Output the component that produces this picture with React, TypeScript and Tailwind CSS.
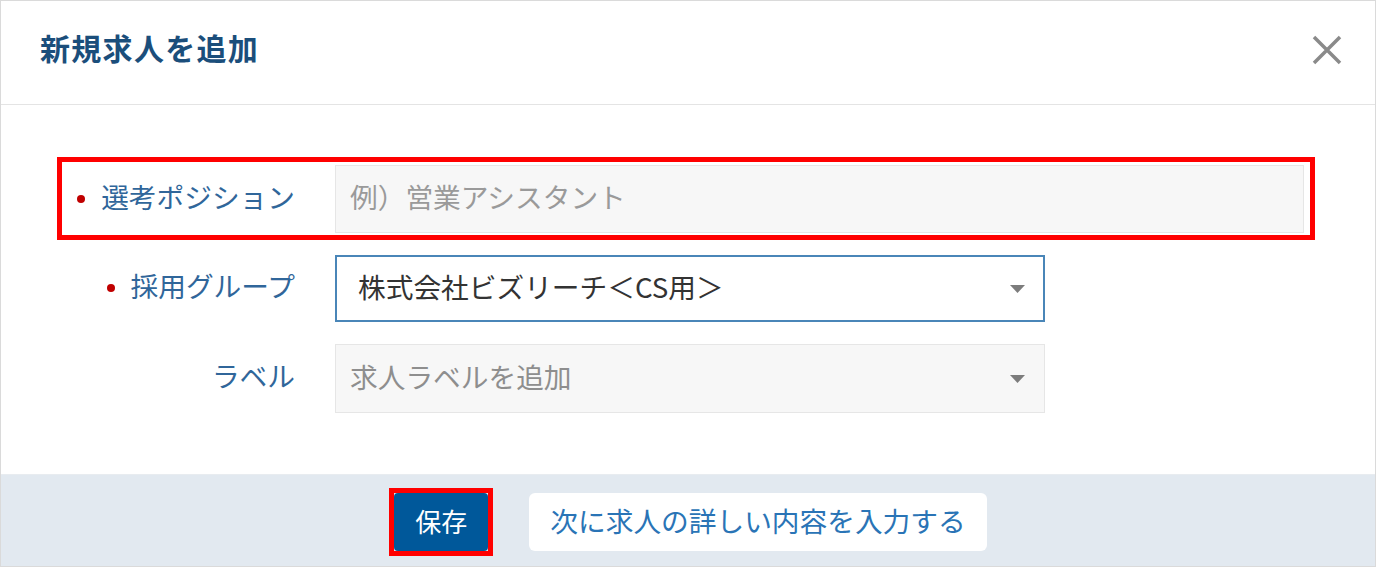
import React from 'react';

const font = { fontFamily: '"Noto Sans CJK JP", "Noto Sans", sans-serif' };

const Caret = () => (
  <svg width="15" height="8" viewBox="0 0 15 8" className="shrink-0">
    <polygon points="0,0 15,0 7.5,8" fill="#7c7c7c" />
  </svg>
);

const Label: React.FC<{ text: string; required?: boolean }> = ({ text, required }) => (
  <div className="w-[233px] shrink-0 flex items-center justify-end text-[27.7px] leading-none text-[#30669a]">
    {required && <span className="w-[8px] h-[8px] rounded-full bg-[#c00000] mr-[16px]" />}
    <span className="pb-[5px]">{text}</span>
  </div>
);

export default function App() {
  return (
    <div style={font} className="w-[1376px] h-[567px] bg-white border border-[#dadada] flex flex-col">
      {/* header */}
      <div className="h-[104px] shrink-0 flex items-center justify-between pl-[39px] pr-[33px] pb-[6px] border-b border-[#e4e4e4]">
        <h1 className="text-[30px] font-bold leading-none text-[#1b4e7b] tracking-[1.3px] pb-[5px]">新規求人を追加</h1>
        <svg width="30" height="30" viewBox="0 0 30 30">
          <path d="M2 2 L28 28 M28 2 L2 28" stroke="#8a8a8a" strokeWidth="3.5" />
        </svg>
      </div>

      {/* body */}
      <div className="flex-1 pt-[52px]">
        <div className="ml-[56px] w-[1258px] border-[5px] border-[#ff0000] pt-[3px] pb-[2px] pr-[6px] flex items-center">
          <Label text="選考ポジション" required />
          <div className="ml-[40px] flex-1 h-[68px] bg-[#f7f7f7] border border-[#e6e6e6] flex items-center pl-[14px] pb-[4px] text-[27.7px] leading-none text-[#9a9a9a]">
            例）営業アシスタント
          </div>
        </div>

        <div className="mt-[15px] pl-[61px] flex items-center">
          <Label text="採用グループ" required />
          <div className="ml-[40px] w-[710px] h-[67px] bg-white border-2 border-[#4a86b8] flex items-center justify-between pl-[21px] pr-[18px] text-[27.7px] leading-none text-[#333333]">
            <span className="pb-[4px]">株式会社ビズリーチ＜CS用＞</span>
            <Caret />
          </div>
        </div>

        <div className="mt-[22px] pl-[61px] flex items-center">
          <Label text="ラベル" />
          <div className="ml-[40px] w-[710px] h-[69px] bg-[#f7f7f7] border border-[#e6e6e6] flex items-center justify-between pl-[14px] pr-[19px] text-[27.7px] leading-none text-[#8e8e8e]">
            <span className="pb-[4px]">求人ラベルを追加</span>
            <Caret />
          </div>
        </div>
      </div>

      {/* footer */}
      <div className="h-[92px] shrink-0 bg-[#e2e9f0] border-t border-[#e8ecf0] flex items-start justify-center pt-[13px] gap-[36px]">
        <div className="border-[5px] border-[#ff0000]">
          <button className="w-[94px] h-[58px] bg-[#00589a] rounded-[4px] text-white text-[26px] leading-none pb-[3px]">保存</button>
        </div>
        <button className="mt-[5px] h-[58px] px-[21px] bg-white rounded-[6px] text-[#2a74b6] text-[27.7px] leading-none pb-[3px]">
          次に求人の詳しい内容を入力する
        </button>
      </div>
    </div>
  );
}
